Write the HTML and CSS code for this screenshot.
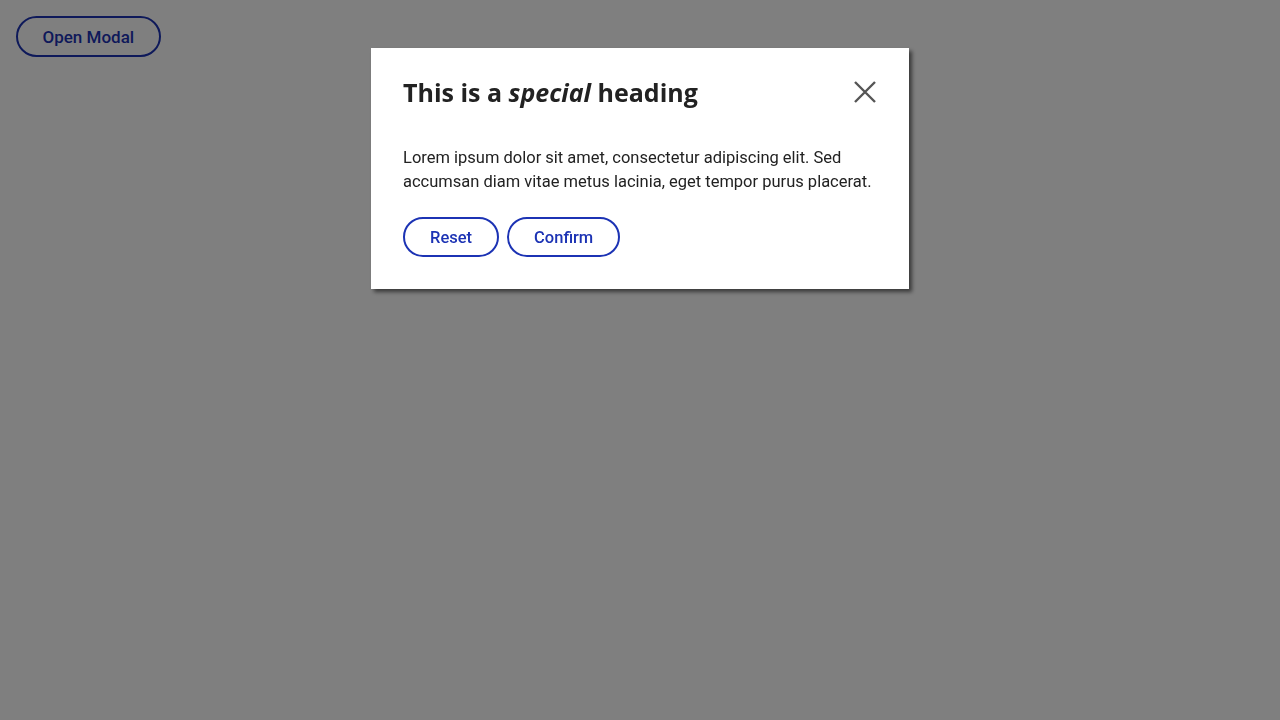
FILE: index.html
```html
<!DOCTYPE html>
<html lang="en">
<head>
<meta charset="utf-8">
<title>Modal</title>
<link rel="stylesheet" href="styles.css">
</head>
<body>
<div class="page">
  <button class="btn btn-open" type="button">Open Modal</button>
</div>
<div class="overlay">
  <div class="modal" role="dialog" aria-modal="true" aria-labelledby="modal-title">
    <div class="modal-header">
      <h2 class="modal-title" id="modal-title">This is a <em>special</em> heading</h2>
      <button class="close" type="button" aria-label="Close">
        <svg width="24" height="24" viewBox="0 0 24 24" aria-hidden="true"><path d="M2 2 L22 22 M22 2 L2 22" stroke="#555" stroke-width="2.4" fill="none"/></svg>
      </button>
    </div>
    <p class="modal-body">Lorem ipsum dolor sit amet, consectetur adipiscing elit. Sed accumsan diam vitae metus lacinia, eget tempor purus placerat.</p>
    <div class="modal-actions">
      <button class="btn" type="button">Reset</button>
      <button class="btn" type="button">Confirm</button>
    </div>
  </div>
</div>
</body>
</html>
```
FILE: styles.css
```css
html, body {
  margin: 0;
  padding: 0;
  height: 100%;
}
body {
  background: #ffffff;
  font-family: "Roboto", "Liberation Sans", sans-serif;
  color: #222;
}
.page {
  padding: 16px;
}
.btn {
  font-family: "Roboto", "Liberation Sans", sans-serif;
  font-size: 16.5px;
  font-weight: 500;
  color: #1c33b4;
  background: #fff;
  border: 2px solid #1c33b4;
  border-radius: 20px;
  height: 40px;
  padding: 0 25px;
  cursor: pointer;
}
.btn-open {
  height: 41px;
  font-size: 17px;
  padding: 0 24.5px;
  border-radius: 21px;
}
.overlay {
  position: fixed;
  inset: 0;
  background: rgba(0, 0, 0, 0.5);
}
.modal {
  box-sizing: border-box;
  width: 538px;
  margin: 48px auto 0;
  background: #fff;
  padding: 32px;
  box-shadow: 3px 3px 4px rgba(0, 0, 0, 0.55);
}
.modal-header {
  display: flex;
  justify-content: space-between;
  align-items: center;
}
.modal-title {
  margin: 0;
  font-family: "Open Sans", sans-serif;
  font-size: 25px;
  font-weight: 700;
  line-height: 24px;
  color: #222;
}
.modal-title em {
  font-style: italic;
}
.close {
  background: none;
  border: 0;
  padding: 0;
  width: 24px;
  height: 24px;
  cursor: pointer;
}
.close svg {
  display: block;
}
.modal-body {
  margin: 42px 0 23px;
  font-size: 16.5px;
  line-height: 24px;
  color: #222;
}
.modal-actions {
  display: flex;
  gap: 8px;
}
```
